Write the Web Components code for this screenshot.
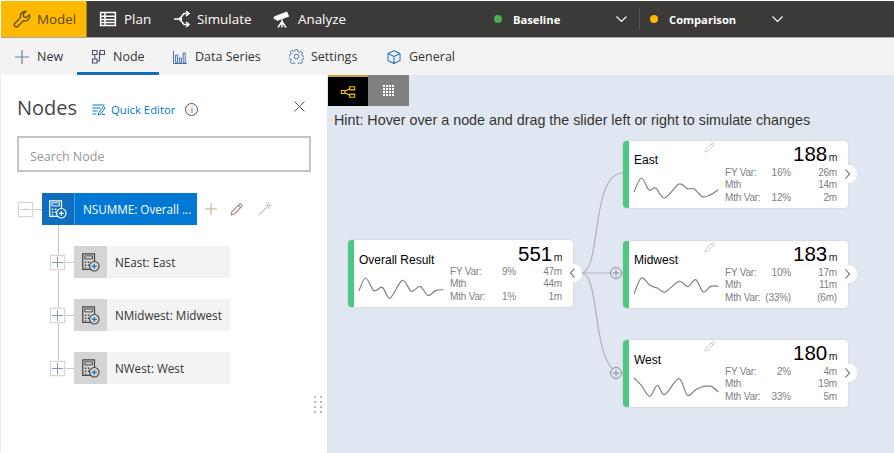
<!DOCTYPE html>
<html lang="en"><head><meta charset="utf-8"><title>Nodes</title>
<style>
html,body{margin:0;padding:0;height:100%;overflow:hidden;background:#fff}
</style></head>
<body>
<app-shell>
  <top-bar slot="top"></top-bar>
  <sub-bar slot="sub"></sub-bar>
  <nodes-panel slot="panel">
    <tree-node slot="tree" root label="NSUMME: Overall ..."></tree-node>
    <tree-node slot="tree" label="NEast: East"></tree-node>
    <tree-node slot="tree" label="NMidwest: Midwest"></tree-node>
    <tree-node slot="tree" label="NWest: West"></tree-node>
  </nodes-panel>
  <diagram-canvas slot="canvas">
    <kpi-card style="left:21px;top:165px;--vl:27px" title-text="Overall Result" value="551" side="left" spark="overall" edit="0"
      rows="FY Var:|9%|47m;Mth||44m;Mth Var:|1%|1m"></kpi-card>
    <kpi-card style="left:296px;top:66px;--tm:-1px" title-text="East" value="188" side="right" spark="east" edit="1"
      rows="FY Var:|16%|26m;Mth||14m;Mth Var:|12%|2m"></kpi-card>
    <kpi-card style="left:296px;top:166px;--tm:-1px" title-text="Midwest" value="183" side="right" spark="midwest" edit="1"
      rows="FY Var:|10%|17m;Mth||11m;Mth Var:|(33%)|(6m)"></kpi-card>
    <kpi-card style="left:296px;top:265px" title-text="West" value="180" side="right" spark="west" edit="1"
      rows="FY Var:|2%|4m;Mth||19m;Mth Var:|33%|5m"></kpi-card>
  </diagram-canvas>
</app-shell>
<script>
const UI='"Open Sans","Noto Sans","Liberation Sans",sans-serif';
const ICONS={
 wrench:'<path d="M12 1.6a4.7 4.7 0 0 0-4.500 6L1.900 13.200a2.100 2.100 0 0 0 3 3l5.600-5.600a4.700 4.700 0 0 0 5.900-6l-3 3-2.600-.7-.7-2.600 3-3a4.700 4.700 0 0 0-1.100-.1z" fill="none" stroke="currentColor" stroke-width="1.300" stroke-linejoin="round"/>',
 table:'<path d="M1.600 2.600h14.800v12.800H1.600zM1.600 6.200h14.800M1.600 9.400h14.800M1.600 12.400h14.800M6 2.600v12.800" fill="none" stroke="currentColor" stroke-width="1.500"/>',
 simulate:'<path d="M0 10h5.500M5.500 10L10 4.500h4M5.500 10L10 15.500h4M12 2l3 2.500L12 7M12 13l3 2.500-3 2.500" fill="none" stroke="currentColor" stroke-width="1.500"/><circle cx="6.500" cy="10" r="1.700" fill="currentColor"/>',
 scope:'<path d="M1 6.500L14 1.500l2.200 5L4 11zM3.800 4.800l1.600 4.300" fill="currentColor"/><path d="M9 9.500v8M9 11.500L5 17.500M9 11.500l4 6" fill="none" stroke="currentColor" stroke-width="1.500"/><path d="M1 6.200l-.5 2.400 2.600 1.600" fill="currentColor"/>',
 plus:'<path d="M7 0v14M0 7h14" fill="none" stroke="currentColor" stroke-width="1.200"/>',
 node:'<path d="M1.500 1.500h4.500v4H1.500zM9 1.500h4.500v4H9zM1.500 10h4.500v4H1.500zM3.800 5.500V10M6 12h2.500V3.500H9" fill="none" stroke="currentColor" stroke-width="1.100"/>',
 bars:'<path d="M.5 1v12.500H14M2.600 5v7.500h2V5zM6.400 8v4.500h2V8zM10.200 3v9.500h2V3z" fill="none" stroke="currentColor" stroke-width="1"/>',
 gear:'<circle cx="7.500" cy="7.500" r="2.300" fill="none" stroke="currentColor" stroke-width="1"/><path d="M6.300.8h2.400l.4 1.900 1.300.6 1.700-1 1.600 1.600-1 1.700.6 1.300 1.900.4v2.400l-1.900.4-.6 1.300 1 1.700-1.600 1.600-1.700-1-1.300.6-.4 1.900H6.300l-.4-1.900-1.300-.6-1.700 1-1.600-1.600 1-1.700-.6-1.300-1.900-.4V6.300l1.900-.4.6-1.300-1-1.700 1.600-1.600 1.700 1 1.300-.6z" fill="none" stroke="currentColor" stroke-width="1"/>',
 cube:'<path d="M7 .8l6 2.800v7L7 13.600l-6-3v-7zM1 3.600l6 2.800 6-2.800M7 6.400v7.200" fill="none" stroke="currentColor" stroke-width="1.100" stroke-linejoin="round"/>',
 quick:'<path d="M.5 2h12M.5 5h8M.5 8h5M.5 11h4M11.500 3.500L7 9.500l-.8 2.600 2.500-1.100 4.300-6zM10 11.500h3" fill="none" stroke="currentColor" stroke-width="1"/>',
 pencil:'<path d="M1.200 12.800l.9-3.400L10 1.500a1.500 1.500 0 0 1 2.500 2.500L4.600 11.900zM9 2.600l2.400 2.400" fill="none" stroke="currentColor" stroke-width="1.200" stroke-linejoin="round"/>',
 wand:'<path d="M1 13L9 5" fill="none" stroke="currentColor" stroke-width="1.500"/><path d="M10.500 0v7M7 3.500h7M8 1l5 5M13 1L8 6" fill="none" stroke="currentColor" stroke-width=".8"/>',
 calc:'<path d="M.8.8h12.400v16.400H.8z" fill="none" stroke="currentColor" stroke-width="1.300"/><path d="M3 3h8v3.200H3z" fill="none" stroke="currentColor" stroke-width="1"/><path d="M3 9h1.600v1.600H3zM6.200 9h1.600v1.600H6.200zM3 12h1.600v1.600H3zM6.200 12h1.600v1.600H6.200zM3 15h1.600v1.200H3z" fill="currentColor"/><circle cx="13" cy="14" r="5" fill="var(--calc-bg,#d4d4d4)" stroke="currentColor" stroke-width="1.200"/><path d="M13 11.500v5M10.500 14h5" stroke="var(--calc-plus,#1f6fb5)" stroke-width="1.300"/>',
 flow:'<path d="M1 6.500h5v4H1zM13 1h7v4.500h-7zM13 11.500h7V16h-7zM6 7.500L13 4M6 9.500l7 3.500" fill="none" stroke="currentColor" stroke-width="1.500"/>',
 chev:'<path d="M.5.5L5.500 5.500 10.500.5" fill="none" stroke="currentColor" stroke-width="1.100"/>',
 x:'<path d="M.5.5l10 10M10.500.5l-10 10" fill="none" stroke="currentColor" stroke-width="1"/>'
};
const svg=(n,w,h,vb,st='')=>`<svg width="${w}" height="${h}" viewBox="${vb||`0 0 ${w} ${h}`}" style="display:block;flex:none;${st}" aria-hidden="true">${ICONS[n]}</svg>`;
function def(name,fn){customElements.define(name,class extends HTMLElement{
  connectedCallback(){ if(!this.shadowRoot){this.attachShadow({mode:'open'}).innerHTML=fn(this);} }
});}

def('app-shell',()=>`<style>
:host{display:flex;flex-direction:column;width:894px;height:453px;background:#fff;overflow:hidden}
.main{flex:1;display:flex;min-height:0}
</style><slot name="top"></slot><slot name="sub"></slot>
<div class="main"><slot name="panel"></slot><slot name="canvas"></slot></div>`);

def('top-bar',()=>`<style>
:host{display:flex;align-items:stretch;height:36px;margin:1px 0 0 1px;background:#3b3a39;border-bottom:1px solid #a6a6a6;color:#fff;font:13.400px ${UI};flex:none}
.t{display:flex;align-items:center;white-space:nowrap}
.t span{display:block}
.m{width:86px;background:#ffb900;color:#5b4a10;border-right:1px solid #a88310;box-sizing:border-box;padding-left:12px;gap:6px}
.p{margin-left:12px;gap:7px}.s{margin-left:23px;gap:7px}.a{margin-left:22px;gap:8px}
.sel{font-size:11.200px;font-weight:700;display:flex;align-items:center}
.sel span{margin-left:11px;width:103px}
.sel svg{margin:-1px 3px 0 0}
.dot{width:8px;height:8px;border-radius:50%;flex:none;margin-top:-1px}
.b{margin-left:148px}
.ln{width:1px;height:22px;background:#565554;margin:7px 10px 0 9px}
</style>
<div class="t m">${svg('wrench',18,18)}<span style="width:40px">Model</span></div>
<div class="t p">${svg('table',18,18)}<span style="width:27px">Plan</span></div>
<div class="t s">${svg('simulate',16,20)}<span style="width:54px">Simulate</span></div>
<div class="t a">${svg('scope',17,18)}<span style="width:48px">Analyze</span></div>
<div class="sel b"><i class="dot" style="background:#4caf50"></i><span>Baseline</span>${svg('chev',11,6)}</div>
<div class="ln"></div>
<div class="sel"><i class="dot" style="background:#ffb900"></i><span>Comparison</span>${svg('chev',11,6)}</div>`);

def('sub-bar',()=>`<style>
:host{display:flex;align-items:stretch;height:37px;background:#f3f3f3;color:#333;font:12.500px ${UI};flex:none;padding-left:15px}
.i{display:flex;align-items:center;color:#333;white-space:nowrap}
.i svg{color:#4a72b8}
.n{width:82px;box-sizing:border-box;margin-left:13px;padding-left:14px;border-bottom:3px solid #106ebe;padding-top:3px}
</style>
<div class="i" style="gap:8px">${svg('plus',14,14,'0 0 14 14','color:#6d7f99')}<span style="width:27px">New</span></div>
<div class="i n" style="gap:7px">${svg('node',15,15,'0 0 15 15','color:#44546a')}<span>Node</span></div>
<div class="i" style="margin-left:14px;gap:8px">${svg('bars',14,14)}<span style="width:67px">Data Series</span></div>
<div class="i" style="margin-left:27px;gap:7px">${svg('gear',15,15)}<span style="width:49px">Settings</span></div>
<div class="i" style="margin-left:27px;gap:8px">${svg('cube',14,14,'0 0 14 14','color:#2b79c2')}<span>General</span></div>`);

def('nodes-panel',()=>`<style>
:host{display:block;position:relative;width:327px;flex:none;box-sizing:border-box;background:#fff;border-left:1px solid #eee;padding:17px 16px 0 16px;font-family:${UI};color:#333}
.h{display:flex;align-items:center;height:30px}
h2{margin:0;font-size:20px;font-weight:400;color:#444;width:75px}
.q{display:flex;align-items:center;gap:5px;color:#0078d4;font-size:11.300px;margin-top:5px}
.info{width:11px;height:11px;border:1px solid #555;border-radius:50%;margin:5px 0 0 10px;font:9px/11px ${UI};text-align:center;color:#555}
.x{margin-left:auto;margin-right:6px;margin-top:-2px;color:#555}
.s{margin-top:14px;height:36px;box-sizing:border-box;border:2px solid #c4c4c4;padding:4px 0 0 11px;display:flex;align-items:center;font-size:12.500px;color:#999}
.tree{position:relative;margin-top:21px;margin-left:1px}
.vl{position:absolute;left:40px;top:20px;height:156px;width:1px;background:#c8c8c8}
.d{position:absolute;right:5px;bottom:40px;display:grid;grid-template-columns:2px 2px;gap:3px 4px}
.d i{width:2px;height:2px;background:#bbb}
</style>
<div class="h"><h2>Nodes</h2><div class="q">${svg('quick',14,13,'0 0 14 13')}<span>Quick Editor</span></div><div class="info">i</div><div class="x">${svg('x',11,11)}</div></div>
<div class="s">Search Node</div>
<div class="tree"><div class="vl"></div><slot name="tree"></slot></div>
<div class="d"><i></i><i></i><i></i><i></i><i></i><i></i><i></i><i></i></div>`);

def('tree-node',e=>{const r=e.hasAttribute('root');return `<style>
:host{display:flex;align-items:center;position:relative;height:32px;margin-bottom:21px;margin-left:${r?0:32}px;font:11.700px ${UI}}
.box{width:15px;height:15px;box-sizing:border-box;border:1px solid #d6d6d6;background:#fff;display:flex;align-items:center;justify-content:center;flex:none;position:relative;box-shadow:0 0 0 .5px #eee}
.l{width:9px;height:1px;background:#c8c8c8;flex:none}
.n{display:flex;align-items:stretch;height:32px;width:${r?155:156}px;background:${r?'#0078d4':'#f3f3f3'};color:${r?'#fff':'#333'}}
.ic{width:${r?32:33}px;background:${r?'#106ebe':'#d4d4d4'};display:flex;align-items:center;justify-content:center;color:${r?'#fff':'#444'};--calc-bg:${r?'#106ebe':'#d4d4d4'};--calc-plus:${r?'#fff':'#1f6fb5'};border-right:${r?'1px solid #4a9ade':'0'}}
.t{padding-left:8px;display:flex;align-items:center;white-space:nowrap}
.a{display:flex;align-items:center;margin-left:8px;gap:13px;color:#b8b8b8}
</style>
<div class="box">${svg('plus',11,11,'0 0 14 14',`color:${r?'#999':'#7f93ad'};${r?'clip-path:inset(45% 0)':''}`)}</div><div class="l"></div>
<div class="n"><div class="ic">${svg('calc',18,19,'0 0 19 20')}</div><div class="t">${e.getAttribute('label')}</div></div>
${r?`<div class="a">${svg('plus',12,12,'0 0 14 14','color:#c0a98f')}${svg('pencil',13,13,'0 0 14 14','color:#a08a80')}<span style="margin-left:2px;display:block">${svg('wand',14,14,'0 0 14 14','color:#c5cbd8')}</span></div>`:''}`});

def('diagram-canvas',()=>`<style>
:host{display:block;position:relative;flex:1;background:#e1e7f1;padding-left:1px;font-family:"Liberation Sans",Arial,sans-serif}
.tg{display:flex;height:31px;align-items:stretch}
.tg div{display:flex;align-items:center;justify-content:center;box-sizing:border-box}
.on{width:40px;background:#000;border-top:2px solid #c9a227;color:#ffc800}
.off{width:41px;background:#808080;color:#fff}
.hint{margin:6px 0 0 6px;font-size:14.300px;line-height:16px;color:#333;white-space:nowrap}
svg.w{position:absolute;left:0;top:0;pointer-events:none}
</style>
<div class="tg"><div class="on">${svg('flow',16,12,'0 0 21 17')}</div><div class="off"><svg width="11" height="11" viewBox="0 0 11 11" style="display:block"><path fill="#fff" d="M0 0h11v11H0z"/><path stroke="#808080" d="M0 2.500h11M0 5.500h11M0 8.500h11M2.500 0v11M5.500 0v11M8.500 0v11"/></svg></div></div>
<div class="hint">Hint: Hover over a node and drag the slider left or right to simulate changes</div>
<svg class="w" width="567" height="378" viewBox="327 75 567 378" fill="none">
<path d="M581 273C602 273 590 173 623 173M581 273H623M581 273C602 273 590 373 623 373" stroke="#b0b2b6" stroke-width="1.200"/>
<g stroke="#8c8c8c" fill="#e1e7f1"><circle cx="616" cy="273" r="5.500"/><circle cx="616" cy="373" r="5.500"/><path d="M612.500 273h7M616 269.500v7M612.500 373h7M616 369.500v7"/></g>
</svg>
<slot></slot>`);

const SP={
 overall:[[0,38],[20,0],[45,38],[70,28],[93,60],[130,7],[157,40],[183,25],[207,52],[230,38],[253,35]],
 east:[[0,42],[22,0],[45,36],[65,30],[92,60],[135,18],[160,32],[180,32],[205,56],[230,50],[253,35]],
 midwest:[[0,48],[22,0],[48,22],[70,30],[93,42],[135,10],[162,26],[185,5],[208,42],[230,25],[253,25]],
 west:[[0,0],[22,22],[47,55],[70,22],[92,50],[135,2],[160,52],[185,35],[208,25],[232,25],[253,42]]
};
function smooth(p){let d=`M${p[0][0]/3} ${p[0][1]/3}`;for(let i=0;i<p.length-1;i++){const a=p[Math.max(i-1,0)],b=p[i],c=p[i+1],e=p[Math.min(i+2,p.length-1)],t=1/6;
 d+=`C${(b[0]+(c[0]-a[0])*t)/3} ${(b[1]+(c[1]-a[1])*t)/3} ${(c[0]-(e[0]-b[0])*t)/3} ${(c[1]-(e[1]-b[1])*t)/3} ${c[0]/3} ${c[1]/3}`}return d}

def('kpi-card',e=>{const a=n=>e.getAttribute(n),left=a('side')==='left';
 const rows=a('rows').split(';').map(r=>{const c=r.split('|');return `<span>${c[0]}</span><span class="p">${c[1]}</span><span class="p">${c[2]}</span>`}).join('');
 return `<style>
:host{position:absolute;display:block;width:224.500px;height:66.500px;font-family:"Liberation Sans",Arial,sans-serif;color:#000}
.c{display:flex;height:100%;box-sizing:border-box;background:#fff;border-radius:4px;border-left:6px solid #4bc884;box-shadow:0 0 2px rgba(120,130,150,.35);overflow:hidden}
.l{width:96px;padding:13px 0 0 5px;box-sizing:border-box;flex:none}
.tt{font-size:12px;line-height:14px;white-space:nowrap;margin-top:var(--tm,0px);margin-bottom:calc(0px - var(--tm,0px))}
.sp{display:block;margin-top:9px;overflow:visible}
.r{flex:1;padding-right:10px;min-width:0}
.v{display:flex;justify-content:flex-end;align-items:baseline;height:26px;line-height:var(--vl,25px);font-size:20.500px}
.v small{font-size:10.500px;margin-left:1.500px;color:#222}
.g{display:grid;grid-template-columns:37px 29px 46px;font-size:10px;letter-spacing:-.2px;line-height:12.300px;color:#808080;white-space:nowrap}
.p{text-align:right}
.tab{position:absolute;top:24px;right:-9px;width:17px;height:18px;border-radius:9px;background:#fff;display:flex;align-items:center;justify-content:center}
.tab svg{margin-left:-2px}
.pen{position:absolute;left:81px;top:.5px;color:#c9c9c9}
</style>
<div class="c"><div class="l"><div class="tt">${a('title-text')}</div>
<svg class="sp" width="85" height="22" viewBox="0 -2 85 22" fill="none"><path d="${smooth(SP[a('spark')])}" stroke="#808080" stroke-width="1.200"/></svg></div>
<div class="r"><div class="v"><span>${a('value')}</span><small>m</small></div><div class="g">${rows}</div></div></div>
<div class="tab"><svg width="5" height="10" viewBox="0 0 5 10" fill="none"><path d="${left?'M4.500.5L.5 5l4 4.500':'M.5.5L4.500 5l-4 4.500'}" stroke="#666" stroke-width="1.100"/></svg></div>
${a('edit')==='1'?`<div class="pen">${svg('pencil',11,11,'0 0 14 14')}</div>`:''}`});
</script>
</body></html>
